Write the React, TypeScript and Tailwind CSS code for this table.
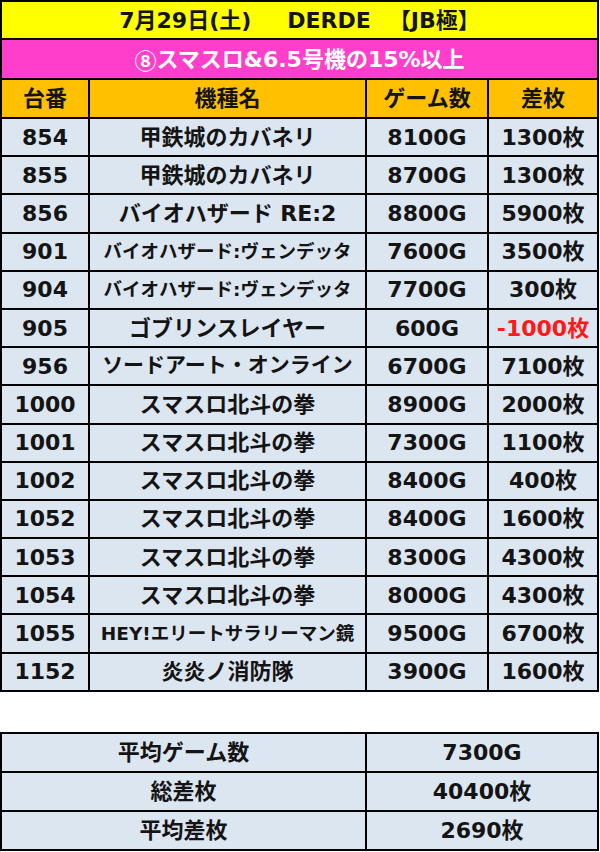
const rows = [
  { no: "854", name: "甲鉄城のカバネリ", games: "8100G", diff: "1300枚" },
  { no: "855", name: "甲鉄城のカバネリ", games: "8700G", diff: "1300枚" },
  { no: "856", name: "バイオハザード RE:2", games: "8800G", diff: "5900枚" },
  { no: "901", name: "バイオハザード:ヴェンデッタ", games: "7600G", diff: "3500枚", size: "small" },
  { no: "904", name: "バイオハザード:ヴェンデッタ", games: "7700G", diff: "300枚", size: "small" },
  { no: "905", name: "ゴブリンスレイヤー", games: "600G", diff: "-1000枚", minus: true },
  { no: "956", name: "ソードアート・オンライン", games: "6700G", diff: "7100枚", size: "mid" },
  { no: "1000", name: "スマスロ北斗の拳", games: "8900G", diff: "2000枚" },
  { no: "1001", name: "スマスロ北斗の拳", games: "7300G", diff: "1100枚" },
  { no: "1002", name: "スマスロ北斗の拳", games: "8400G", diff: "400枚" },
  { no: "1052", name: "スマスロ北斗の拳", games: "8400G", diff: "1600枚" },
  { no: "1053", name: "スマスロ北斗の拳", games: "8300G", diff: "4300枚" },
  { no: "1054", name: "スマスロ北斗の拳", games: "8000G", diff: "4300枚" },
  { no: "1055", name: "HEY!エリートサラリーマン鏡", games: "9500G", diff: "6700枚", size: "small" },
  { no: "1152", name: "炎炎ノ消防隊", games: "3900G", diff: "1600枚" },
];

const summary = [
  { label: "平均ゲーム数", value: "7300G" },
  { label: "総差枚", value: "40400枚" },
  { label: "平均差枚", value: "2690枚" },
];

const cols = "grid grid-cols-[86px_275px_120px_108px] gap-x-[2px]";
const cell = "bg-[#dce6f1] flex items-center justify-center whitespace-nowrap";

const nameSize = (size?: string) =>
  size === "small" ? "text-[18.5px]" : size === "mid" ? "text-[21px]" : "text-[22px]";

export default function App() {
  return (
    <div
      className="w-[600px] h-[852px] bg-white text-[#141414] font-bold"
      style={{ fontFamily: '"DejaVu Sans", "Noto Sans CJK JP", sans-serif' }}
    >
      <div className="w-[599px] bg-black p-[2px] flex flex-col gap-y-[2px]">
        <div className="h-[36px] bg-[#ffff00] flex items-center justify-center text-[22px] whitespace-nowrap">
          <span>7月29日(土)</span>
          <span className="ml-[36px]">DERDE</span>
          <span className="ml-[18px]">【JB極】</span>
        </div>
        <div className="h-[38px] bg-[#ff3fcc] flex items-center justify-center text-[22px] text-white">
          <span style={{ fontFamily: '"Noto Sans CJK JP", sans-serif' }}>⑧</span>
          スマスロ&amp;6.5号機の15%以上
        </div>
        <div className={`${cols} h-[37px]`}>
          {["台番", "機種名", "ゲーム数", "差枚"].map((h) => (
            <div key={h} className="bg-[#ffc000] flex items-center justify-center text-[22px]">
              {h}
            </div>
          ))}
        </div>
        {rows.map((r) => (
          <div key={r.no} className={`${cols} h-[36.2px]`}>
            <div className={`${cell} text-[22px]`}>{r.no}</div>
            <div className={`${cell} ${nameSize(r.size)}`}>{r.name}</div>
            <div className={`${cell} text-[22px]`}>{r.games}</div>
            <div className={`${cell} text-[22px] ${r.minus ? "text-[#ff1a1a]" : ""}`}>{r.diff}</div>
          </div>
        ))}
      </div>

      <div className="mt-[40px] w-[599px] bg-black p-[2px] flex flex-col gap-y-[2px]">
        {summary.map((s) => (
          <div key={s.label} className="grid grid-cols-[363px_230px] gap-x-[2px] h-[37px]">
            <div className={`${cell} text-[22px]`}>{s.label}</div>
            <div className={`${cell} text-[22px]`}>{s.value}</div>
          </div>
        ))}
      </div>
    </div>
  );
}
